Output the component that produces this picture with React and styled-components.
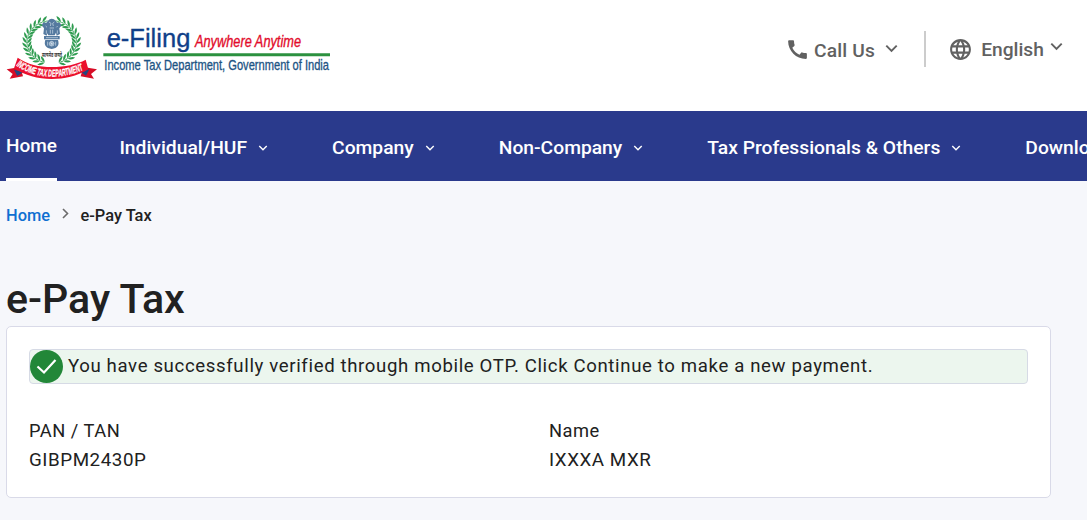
import React from 'react';
import styled, { createGlobalStyle } from 'styled-components';
import { MdCall, MdLanguage } from 'react-icons/md';

const GlobalStyle = createGlobalStyle`
  * {
    box-sizing: border-box;
  }

  body {
    margin: 0;
    background: #f6f7fb;
    color: #212121;
    font-family: Roboto, "Liberation Sans", sans-serif;
    overflow: hidden;
  }
`;

const Page = styled.div`
  height: 520px;
  overflow: hidden;
`;

const Header = styled.header`
  display: flex;
  justify-content: space-between;
  height: 111px;
  padding-right: 24px;
  background: #ffffff;
`;

const LogoLink = styled.a`
  display: flex;
  padding-top: 8px;
`;

const LogoSvg = styled.svg`
  width: 335px;
  height: 80px;
  overflow: visible;
`;

const Tools = styled.div`
  display: flex;
  align-items: center;
  height: 98px;
`;

const Tool = styled.button`
  display: flex;
  align-items: center;
  padding: 0;
  border: none;
  background: none;
  color: #616161;
  font-family: inherit;
  font-size: 19.2px;
  font-weight: 500;
  line-height: 24px;
  white-space: nowrap;
`;

const CallIcon = styled(MdCall)`
  width: 25px;
  height: 25px;
  margin-right: 4px;
`;

const GlobeIcon = styled(MdLanguage)`
  width: 25px;
  height: 25px;
  margin-right: 8px;
`;

const ToolLabel = styled.span`
  width: ${(props) => props.$width}px;
  padding-top: ${(props) => props.$drop || 0}px;
  letter-spacing: ${(props) => props.$spacing || 0}px;
`;

const ToolArrow = styled.svg`
  width: 13px;
  height: 9px;
  margin-left: ${(props) => props.$gap}px;
  margin-bottom: ${(props) => props.$lift}px;
`;

const Divider = styled.span`
  width: 2px;
  height: 36px;
  margin: 0 22px 0 26px;
  background: #cccccc;
`;

const Nav = styled.nav`
  display: flex;
  height: 70px;
  padding-left: 6px;
  background: #2a3a8c;
  color: #ffffff;
  font-size: 19.27px;
  font-weight: 500;
  line-height: 24px;
  white-space: nowrap;
`;

const NavHome = styled.a`
  width: 51px;
  margin-right: 62.4px;
  padding-top: 23px;
  border-bottom: 3px solid #ffffff;
  font-size: 19px;
`;

const NavItem = styled.a`
  display: flex;
  flex-shrink: 0;
  align-items: center;
  height: 24px;
  margin-top: 25px;
  margin-right: 64px;
`;

const NavArrow = styled.svg`
  width: 10px;
  height: 6px;
  margin-left: 11px;
`;

const Breadcrumb = styled.div`
  display: flex;
  align-items: center;
  height: 24px;
  margin: 22px 0 0 6px;
  font-size: 16.4px;
  font-weight: 500;
`;

const CrumbLink = styled.a`
  color: #0f6fd1;
`;

const CrumbArrow = styled.svg`
  width: 7px;
  height: 11px;
  margin: 0 11.5px 3px 12px;
`;

const Title = styled.h1`
  margin: 48px 0 0 6px;
  font-size: 41.2px;
  font-weight: 500;
  line-height: 48px;
`;

const Card = styled.section`
  width: 1045px;
  height: 172px;
  margin: 3px 0 0 6px;
  padding: 22px;
  border: 1px solid #d9dae8;
  border-radius: 5px;
  background: #ffffff;
  font-size: 18.6px;
  letter-spacing: 0.64px;
`;

const Alert = styled.div`
  display: flex;
  align-items: center;
  height: 35px;
  border: 1px solid #d6dae5;
  border-radius: 4px;
  background: #ecf6ee;
`;

const AlertText = styled.span`
  padding-bottom: 2px;
  white-space: nowrap;
`;

const CheckIcon = styled.svg`
  width: 33px;
  height: 33px;
  margin-right: 5px;
`;

const Details = styled.div`
  display: grid;
  grid-template-columns: 520px 1fr;
  margin-top: 32px;
  line-height: 29px;
`;

const DetailLabel = styled.div`
  font-size: 18.3px;
  letter-spacing: 0.5px;
`;

const DetailValue = styled.div`
  padding-top: 1px;
  font-size: 18.8px;
  letter-spacing: 0.55px;
`;

const leaves = Array.from({ length: 13 }, (_, i) => 22 + i * 11.8);

const Wreath = ({ flip }) => (
  <g transform={flip ? 'translate(310 0) scale(-1 1)' : undefined}>
    {leaves.map((angle) => {
      const a = ((angle + 90) * Math.PI) / 180;
      const x = 155 + 74 * Math.cos(a);
      const y = 102 + 64 * Math.sin(a);
      return (
        <g key={angle} transform={`translate(${x} ${y}) rotate(${angle + 180})`}>
          <path d="M-7 0Q-3 -13 11 -14Q6 -3 -7 0" fill="#2f9c50" />
          <path d="M-7 0Q-3 13 11 14Q6 3 -7 0" fill="#2f9c50" />
          <path d="M-5 0Q3 -4 11 0Q3 4 -5 0" fill="#4fae6d" />
        </g>
      );
    })}
  </g>
);

const Logo = () => (
  <LogoSvg viewBox="0 0 1005 240">
    <Wreath />
    <Wreath flip />
    <g fill="#54799f">
      <path d="M143 39Q155 25 168 39L174 50L170 70L164 82H145L137 69L134 52Z" />
      <path d="M134 43Q125 45 127 54L132 61L130 78L140 83L144 66L140 48Z" />
      <path d="M174 43Q184 45 183 54L178 61L180 78L170 83L166 66L169 48Z" />
      <path d="M132 84H179V94H132Z" />
      <path d="M136 96C131 111 137 120 155 123C173 120 179 111 174 96Z" />
    </g>
    <g fill="none" stroke="#d6e2ed" strokeWidth="2">
      <path d="M147 42L153 46L151 54M163 42L158 46L160 54M149 60H162" />
      <path d="M151 65V77M158 65V77M137 54L141 58M173 54L169 58M139 67V77M172 67V77" />
      <path d="M138 89H174M143 101V113M167 101V113" />
      <circle cx="155" cy="107" r="7" />
      <path d="M148 107H162M155 100V114M150 102L160 112M160 102L150 112" />
    </g>
    <text
      x="126" y="146" textLength="60" lengthAdjust="spacingAndGlyphs"
      fontFamily="Noto Sans, sans-serif" fontSize="21" fontWeight="700" fill="#333"
    >
      सत्यमेव जयते
    </text>
    <path d="M20 184L61 177L69 205L29 212L38 198Z" fill="#d70c26" />
    <path d="M291 184L250 177L242 205L282 212L273 198Z" fill="#d70c26" />
    <path d="M42 185L70 192L52 204Z" fill="#23477f" />
    <path d="M268 184L240 190L258 203Z" fill="#23477f" />
    <path
      d="M53 149C82 169 118 177 155 177C194 177 232 169 257 155L265 184C230 205 193 213 155 213C113 213 76 203 42 181Z"
      fill="#eb102d"
    />
    <path id="ribbonLine" d="M48 173C84 197 119 206 155 206C194 206 229 197 262 180" fill="none" />
    <text
      fontFamily="Liberation Sans, sans-serif" fontSize="30" fontWeight="700"
      fontStyle="italic" fill="#ffffff" stroke="#ffffff" strokeWidth="0.8"
    >
      <textPath href="#ribbonLine" textLength="212" lengthAdjust="spacingAndGlyphs">
        INCOME TAX DEPARTMENT
      </textPath>
    </text>
    <g fontFamily="Liberation Sans, sans-serif" strokeWidth="1">
      <text
        x="320" y="117" textLength="251" lengthAdjust="spacingAndGlyphs"
        fontSize="77" fill="#103f89" stroke="#103f89"
      >
        e-Filing
      </text>
      <text
        x="585" y="116" textLength="318" lengthAdjust="spacingAndGlyphs"
        fontSize="48" fontStyle="italic" fill="#e20b2b" stroke="#e20b2b"
      >
        Anywhere Anytime
      </text>
      <text
        x="313" y="187" textLength="674" lengthAdjust="spacingAndGlyphs"
        fontSize="43" fill="#1d5484" stroke="#1d5484"
      >
        Income Tax Department, Government of India
      </text>
    </g>
    <path d="M310 136H990V145H310Z" fill="#2b913f" />
  </LogoSvg>
);

const Arrow = ({ as: Icon, ...rest }) => (
  <Icon viewBox="0 0 14 9" fill="none" stroke="currentColor" {...rest}>
    <path d="M1.4 1.4L7 7L12.6 1.4" strokeWidth="2.1" />
  </Icon>
);

const menu = ['Individual/HUF', 'Company', 'Non-Company', 'Tax Professionals & Others', 'Downloads'];

const App = () => {
  return (
    <>
      <GlobalStyle />
      <Page>
        <Header>
          <LogoLink>
            <Logo />
          </LogoLink>
          <Tools>
            <Tool>
              <CallIcon />
              <ToolLabel $width={61} $drop={3} $spacing={0.15}>Call Us</ToolLabel>
              <Arrow as={ToolArrow} $gap={10} $lift={2} />
            </Tool>
            <Divider />
            <Tool>
              <GlobeIcon />
              <ToolLabel $width={63} $drop={1}>English</ToolLabel>
              <Arrow as={ToolArrow} $gap={6} $lift={5} />
            </Tool>
          </Tools>
        </Header>

        <Nav>
          <NavHome>Home</NavHome>
          {menu.map((label) => (
            <NavItem key={label}>
              {label}
              <Arrow as={NavArrow} />
            </NavItem>
          ))}
        </Nav>

        <Breadcrumb>
          <CrumbLink>Home</CrumbLink>
          <CrumbArrow viewBox="0 0 7 11" fill="none" stroke="#6b6b6b" strokeWidth="1.6">
            <path d="M1 1L5.5 5.5L1 10" />
          </CrumbArrow>
          <span>e-Pay Tax</span>
        </Breadcrumb>

        <Title>e-Pay Tax</Title>

        <Card>
          <Alert>
            <CheckIcon viewBox="0 0 33 33">
              <circle cx="16.5" cy="16.5" r="16.5" fill="#228738" />
              <path d="M7.5 16.5L14 22.5L25.5 10" fill="none" stroke="#ffffff" strokeWidth="2.2" />
            </CheckIcon>
            <AlertText>
              You have successfully verified through mobile OTP. Click Continue to make a new payment.
            </AlertText>
          </Alert>
          <Details>
            <div>
              <DetailLabel>PAN / TAN</DetailLabel>
              <DetailValue>GIBPM2430P</DetailValue>
            </div>
            <div>
              <DetailLabel>Name</DetailLabel>
              <DetailValue>IXXXA MXR</DetailValue>
            </div>
          </Details>
        </Card>
      </Page>
    </>
  );
};

export default App;
